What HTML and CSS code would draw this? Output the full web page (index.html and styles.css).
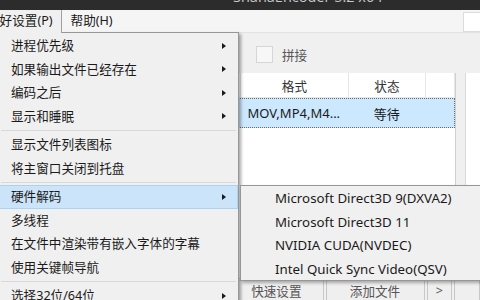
FILE: index.html
```html
<!DOCTYPE html>
<html lang="zh-CN">
<head>
    <meta charset="UTF-8">
    <title>ShanaEncoder 5.2 x64</title>
    <link rel="stylesheet" href="styles.css">
</head>
<body>
    <div class="window">
        <div class="titlebar"><span class="title">ShanaEncoder 5.2 x64</span></div>

        <div class="menubar">
            <span class="menubar-item open">偏好设置(P)</span>
            <span class="menubar-item">帮助(H)</span>
            <span class="search-box"></span>
        </div>

        <div class="toolbar">
            <span class="check"><span class="check-box"></span>拼接</span>
        </div>

        <div class="content">
            <div class="file-table">
                <div class="row head">
                    <div class="cell name">文件</div>
                    <div class="cell fmt">格式</div>
                    <div class="cell state">状态</div>
                    <div class="cell extra"></div>
                </div>
                <div class="row selected">
                    <div class="cell name">video.mov</div>
                    <div class="cell fmt left">MOV,MP4,M4...</div>
                    <div class="cell state">等待</div>
                    <div class="cell extra"></div>
                </div>
            </div>
            <div class="side-panel"></div>
        </div>

        <div class="buttons">
            <span class="btn wide">快速设置</span>
            <span class="btn mid">添加文件</span>
            <span class="btn small">&gt;</span>
            <span class="btn small"></span>
        </div>
    </div>

    <!-- Preferences dropdown -->
    <div class="menu">
        <div class="menu-item sub">进程优先级</div>
        <div class="menu-item sub">如果输出文件已经存在</div>
        <div class="menu-item sub">编码之后</div>
        <div class="menu-item sub">显示和睡眠</div>
        <div class="menu-sep"></div>
        <div class="menu-item">显示文件列表图标</div>
        <div class="menu-item">将主窗口关闭到托盘</div>
        <div class="menu-sep"></div>
        <div class="menu-item sub active">硬件解码</div>
        <div class="menu-item">多线程</div>
        <div class="menu-item">在文件中渲染带有嵌入字体的字幕</div>
        <div class="menu-item">使用关键帧导航</div>
        <div class="menu-sep"></div>
        <div class="menu-item sub">选择32位/64位</div>
    </div>

    <!-- Hardware decoding submenu -->
    <div class="submenu">
        <div class="submenu-item">Microsoft Direct3D 9(DXVA2)</div>
        <div class="submenu-item">Microsoft Direct3D 11</div>
        <div class="submenu-item">NVIDIA CUDA(NVDEC)</div>
        <div class="submenu-item">Intel Quick Sync Video(QSV)</div>
    </div>
</body>
</html>
```

FILE: styles.css
```css
* { margin: 0; padding: 0; box-sizing: border-box; }

body {
    font-family: "Noto Sans", "Noto Sans CJK SC", sans-serif;
    font-size: 12.6px;
    color: #1a1a1a;
    background: #f0f0f0;
    width: 480px;
    height: 300px;
    overflow: hidden;
    position: relative;
}

.window {
    display: flex;
    flex-direction: column;
    height: 300px;
}

.titlebar {
    height: 10px;
    background: #2c2c2c;
    overflow: hidden;
    padding-left: 233px;
}

.title {
    display: block;
    font-family: "Open Sans", sans-serif;
    font-size: 14.5px;
    line-height: 20px;
    margin-top: -13px;
    color: #c8c8c8;
    white-space: nowrap;
}

.menubar {
    height: 23px;
    display: flex;
    align-items: flex-start;
    background: #f5f5f5;
    border-bottom: 1px solid #e2e2e2;
}

.menubar-item {
    height: 22px;
    line-height: 22px;
    padding: 0 8px;
    white-space: nowrap;
}

.menubar-item.open {
    margin-left: -15px;
    padding: 0 8px 0 2px;
    height: 23px;
    background: #f0f0f0;
    border-right: 1px solid #a0a0a0;
    position: relative;
    z-index: 3;
}

.menubar-item.open + .menubar-item {
    margin-left: 1px;
}

.search-box {
    margin-left: auto;
    margin-top: 2px;
    width: 17px;
    height: 20px;
    background: #fff;
    border: 1px solid #dcdcdc;
    border-right: none;
}

.toolbar {
    height: 40px;
    padding: 12px 0 0 256px;
}

.check {
    display: flex;
    align-items: center;
    gap: 9px;
    color: #555;
}

.check-box {
    width: 17px;
    height: 17px;
    background: #f7f7f7;
    border: 1px solid #d6d6d6;
}

.content {
    flex: 1;
    display: flex;
    gap: 9px;
    padding-left: 100px;
}

.file-table {
    width: 356px;
    background: #fff;
    border: 1px solid #d0d0d0;
    border-top: none;
}

.row {
    display: flex;
}

.row.head {
    height: 25px;
    border-bottom: 1px solid #e8e8e8;
}

.row.head .cell {
    border-right: 1px solid #e6e6e6;
    color: #333;
}

.cell {
    display: flex;
    align-items: center;
    justify-content: center;
    white-space: nowrap;
    overflow: hidden;
}

.cell.left {
    justify-content: flex-start;
    padding-left: 6px;
}

.name { width: 141px; }
.fmt { width: 108px; }
.state { width: 78px; }
.extra { width: 29px; }

.row.selected {
    height: 30px;
    background: #cce8ff;
    border: 1px dotted #6a6a6a;
}

.row.selected .cell {
    font-size: 13px;
}

.side-panel {
    flex: 1;
    background: #fff;
    border-left: 1px solid #dadada;
}

.buttons {
    height: 20px;
    display: flex;
    gap: 2px;
    margin-top: 1px;
    padding-left: 160px;
    color: #555;
}

.btn {
    display: flex;
    align-items: center;
    justify-content: center;
    background: #efefef;
    border-left: 1px solid #c8c8c8;
    border-right: 1px solid #c8c8c8;
    border-top: 1px solid #dcdcdc;
    white-space: nowrap;
}

.btn.wide { width: 165px; justify-content: flex-end; padding-right: 21px; }
.btn.mid { width: 100px; }
.btn.small { width: 26px; }

/* Dropdown menu */

.menu {
    position: absolute;
    left: -2px;
    top: 32px;
    width: 241px;
    height: 280px;
    padding-top: 1px;
    background: #f0f0f0;
    border: 1px solid #979797;
    box-shadow: 2px 2px 3px rgba(0, 0, 0, 0.35);
    z-index: 2;
}

.menu-item {
    position: relative;
    height: 23.5px;
    line-height: 23.5px;
    padding-left: 12px;
    white-space: nowrap;
}

.menu-item.sub::after {
    content: "";
    position: absolute;
    right: 12px;
    top: 8.5px;
    border-left: 4px solid #1a1a1a;
    border-top: 3.5px solid transparent;
    border-bottom: 3.5px solid transparent;
}

.menu-item.active {
    background: #cce4f9;
    border: 1px solid #a9d2f3;
    line-height: 21.5px;
    padding-left: 11px;
}

.menu-item.active::after {
    right: 11px;
    top: 7.5px;
}

.menu-sep {
    height: 5px;
    margin: 0 2px;
    border-bottom: 1px solid #d9d9d9;
    transform: translateY(-2px);
}

/* Submenu */

.submenu {
    position: absolute;
    left: 240px;
    top: 185px;
    width: 250px;
    height: 96px;
    padding-top: 1px;
    background: #f0f0f0;
    border: 1px solid #979797;
    box-shadow: 2px 2px 3px rgba(0, 0, 0, 0.3);
    z-index: 2;
}

.submenu-item {
    height: 23.5px;
    line-height: 23.5px;
    padding-left: 34px;
    font-size: 13.3px;
    white-space: nowrap;
}
```
